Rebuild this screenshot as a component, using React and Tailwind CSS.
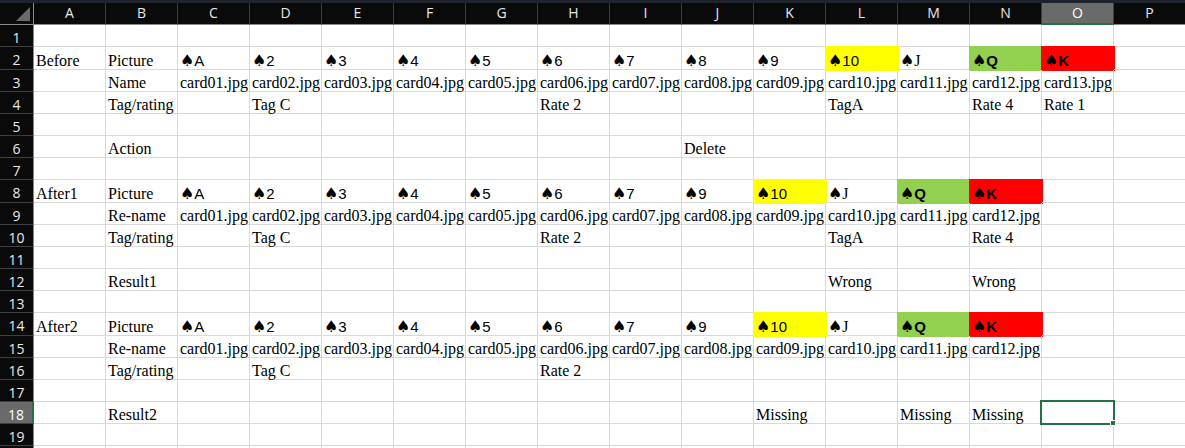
import React from 'react';

const COLS = 'ABCDEFGHIJKLMNOP'.split('');

// fill classes for coloured cells (border + 1px shadow cover the gridlines like Excel)
const FILL = {
  y: 'bg-[#ffff00] border-[#ffff00] shadow-[0_0_0_1px_#ffff00]',
  g: 'bg-[#92d050] border-[#92d050] shadow-[0_0_0_1px_#92d050]',
  r: 'bg-[#ff0000] border-[#ff0000] shadow-[0_0_0_1px_#ff0000]',
};

const card = (rank, fill, bold) => ({ card: true, rank, fill, bold });

function pictureCells(ranks) {
  const out = {};
  ranks.forEach((r, i) => {
    out[COLS[2 + i]] = r;
  });
  return out;
}

function nameCells(count) {
  const out = {};
  for (let i = 0; i < count; i++) {
    out[COLS[2 + i]] = `card${String(i + 1).padStart(2, '0')}.jpg`;
  }
  return out;
}

const beforeRanks = [
  card('A'), card('2'), card('3'), card('4'), card('5'), card('6'), card('7'), card('8'), card('9'),
  card('10', 'y'), card('J'), card('Q', 'g', true), card('K', 'r', true),
];
const afterRanks = [
  card('A'), card('2'), card('3'), card('4'), card('5'), card('6'), card('7'), card('9'),
  card('10', 'y'), card('J'), card('Q', 'g', true), card('K', 'r', true),
];

const ROWS = [
  { n: 1, cells: {} },
  { n: 2, tall: true, cells: { A: 'Before', B: 'Picture', ...pictureCells(beforeRanks) } },
  { n: 3, cells: { B: 'Name', ...nameCells(13) } },
  { n: 4, cells: { B: 'Tag/rating', D: 'Tag C', H: 'Rate 2', L: 'TagA', N: 'Rate 4', O: 'Rate 1' } },
  { n: 5, cells: {} },
  { n: 6, cells: { B: 'Action', J: 'Delete' } },
  { n: 7, cells: {} },
  { n: 8, tall: true, cells: { A: 'After1', B: 'Picture', ...pictureCells(afterRanks) } },
  { n: 9, cells: { B: 'Re-name', ...nameCells(12) } },
  { n: 10, cells: { B: 'Tag/rating', D: 'Tag C', H: 'Rate 2', L: 'TagA', N: 'Rate 4' } },
  { n: 11, cells: {} },
  { n: 12, cells: { B: 'Result1', L: 'Wrong', N: 'Wrong' } },
  { n: 13, cells: {} },
  { n: 14, tall: true, cells: { A: 'After2', B: 'Picture', ...pictureCells(afterRanks) } },
  { n: 15, cells: { B: 'Re-name', ...nameCells(12) } },
  { n: 16, cells: { B: 'Tag/rating', D: 'Tag C', H: 'Rate 2' } },
  { n: 17, cells: {} },
  { n: 18, cells: { B: 'Result2', K: 'Missing', M: 'Missing', N: 'Missing' } },
  { n: 19, cells: {} },
  // row 20 only peeks in at the bottom edge, its number is hidden
  { n: 20, hideLabel: true, cells: {} },
];

function CardText({ value }) {
  return (
    <span className="flex items-end whitespace-nowrap text-black leading-[17px]">
      <span className="font-['DejaVu_Sans',sans-serif] text-[16px]">♠</span>
      {value.rank === 'J' ? (
        <span className="font-['Liberation_Serif',serif] text-[16px]">J</span>
      ) : (
        <span className={`font-['Liberation_Sans',Arial,sans-serif] text-[15px] ${value.bold ? 'font-bold' : ''}`}>
          {value.rank}
        </span>
      )}
    </span>
  );
}

function Cell({ value, selected }) {
  const fill = value && value.card && value.fill ? FILL[value.fill] : 'border-[#d9d9d9]';
  return (
    <div
      className={`flex h-full w-[72px] shrink-0 items-end overflow-visible border-r border-b pl-[2px] ${fill} ${
        selected ? 'relative' : ''
      }`}
    >
      {value && value.card ? (
        <CardText value={value} />
      ) : value ? (
        <span className="whitespace-nowrap leading-[16px] text-[16px] text-black">{value}</span>
      ) : null}
      {selected && (
        <>
          <div className="absolute -left-[2px] -top-[2px] h-[25px] w-[75px] border-2 border-[#217346]" />
          <div className="absolute -bottom-[3px] -right-[3px] h-[6px] w-[6px] border border-white bg-[#217346]" />
        </>
      )}
    </div>
  );
}

export default function App() {
  return (
    <div className="h-[448px] w-[1185px] overflow-hidden bg-white font-['Liberation_Serif','Noto_Sans_CJK_TC',serif]">
      {/* window strip above the grid */}
      <div className="h-[3px] bg-[#1f242b]" />

      {/* column letters */}
      <div className="flex h-[22px] bg-[#0a0a0a]">
        <div className="relative h-full w-[34px] shrink-0 border-r border-b border-[#8a8a8a]">
          <div className="absolute bottom-[3px] right-[3px] h-0 w-0 border-b-[14px] border-l-[14px] border-b-[#6a6a6a] border-l-transparent" />
        </div>
        {COLS.map((c) => (
          <div
            key={c}
            className={`flex h-full w-[72px] shrink-0 items-center justify-center border-r border-b pb-[2px] font-['Open_Sans','Noto_Sans',sans-serif] text-[14px] ${
              c === 'O'
                ? 'bg-[#6a6a6a] border-r-[#3f3f3f] border-b-2 border-b-[#217346] text-white'
                : 'border-r-[#3f3f3f] border-b-[#8a8a8a] text-[#e8e8e8]'
            }`}
          >
            {c}
          </div>
        ))}
      </div>

      {/* rows */}
      {ROWS.map((row) => (
        <div key={row.n} className={`flex ${row.tall ? 'h-[23px]' : 'h-[22px]'}`}>
          <div
            className={`flex h-full w-[34px] shrink-0 items-center justify-center border-b pt-[3px] font-['Open_Sans','Noto_Sans',sans-serif] text-[14px] ${
              row.n === 18
                ? 'bg-[#6a6a6a] border-r-2 border-r-[#217346] border-b-[#3f3f3f] text-white'
                : 'bg-[#0a0a0a] border-r border-r-[#8a8a8a] border-b-[#3f3f3f] text-[#e8e8e8]'
            }`}
          >
            {row.hideLabel ? null : row.n}
          </div>
          {COLS.map((c) => (
            <Cell key={c} value={row.cells[c]} selected={row.n === 18 && c === 'O'} />
          ))}
        </div>
      ))}
    </div>
  );
}
